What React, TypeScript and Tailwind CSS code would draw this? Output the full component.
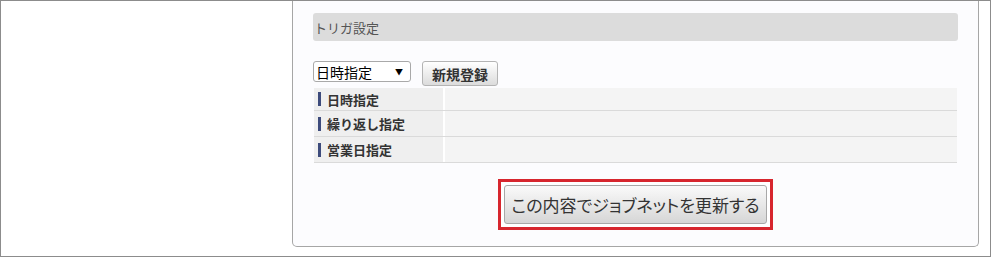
const rows = ['日時指定', '繰り返し指定', '営業日指定'];

const jp = "font-['Noto_Sans_CJK_JP','Noto_Sans',sans-serif]";

export default function App() {
  return (
    <div className={`w-[991px] h-[257px] border border-[#8c8c8c] bg-white flex overflow-hidden ${jp}`}>
      <div className="w-[291px] shrink-0" />
      <div className="w-[687px] h-[246px] shrink-0 border-x border-b border-[#a6a6a6] rounded-b-[5px] bg-[#fcfcfe] px-[20px] pt-[12px]">
        <div className="h-[28px] rounded-[3px] bg-[#dcdcdc] flex items-center pl-[1px] text-[13px] text-[#555] leading-none">
          トリガ設定
        </div>

        <div className="flex items-start gap-[11px] mt-[20px]">
          <div className="w-[98px] h-[21px] border border-[#a9a9a9] rounded-[3px] bg-white flex items-center justify-between pl-[2px] pr-[7px] text-[14px] text-black leading-none">
            <span>日時指定</span>
            <span className="text-[8px]">▼</span>
          </div>
          <button className="w-[76px] h-[25px] border border-[#b4b4b4] rounded-[3px] bg-gradient-to-b from-white to-[#dcdcdc] text-[14px] font-bold text-[#333] leading-none">
            新規登録
          </button>
        </div>

        <div className="mx-[1px] mt-[2px]">
          {rows.map((r, i) => (
            <div
              key={r}
              className={`flex border-b border-[#dadada] ${i === 0 ? 'h-[23px]' : 'h-[26px]'}`}
            >
              <div className="w-[129px] bg-[#efefef] flex items-center pl-[4px]">
                <div className="w-[3px] h-[14px] bg-[#3d4b7c]" />
                <span className="ml-[6px] text-[13px] font-bold text-[#333] leading-none">{r}</span>
              </div>
              <div className="w-[2px] bg-white" />
              <div className="flex-1 bg-[#f4f4f4]" />
            </div>
          ))}
        </div>

        <div className="flex justify-center mt-[16px]">
          <div className="border-[3px] border-[#d7262e] bg-white p-[3px]">
            <button className="w-[263px] h-[39px] border border-[#a8a8a8] rounded-[3px] bg-gradient-to-b from-[#fafafa] to-[#d6d6d6] text-[17px] text-[#333] leading-none [font-feature-settings:'palt']">
              この内容でジョブネットを更新する
            </button>
          </div>
        </div>
      </div>
    </div>
  );
}
